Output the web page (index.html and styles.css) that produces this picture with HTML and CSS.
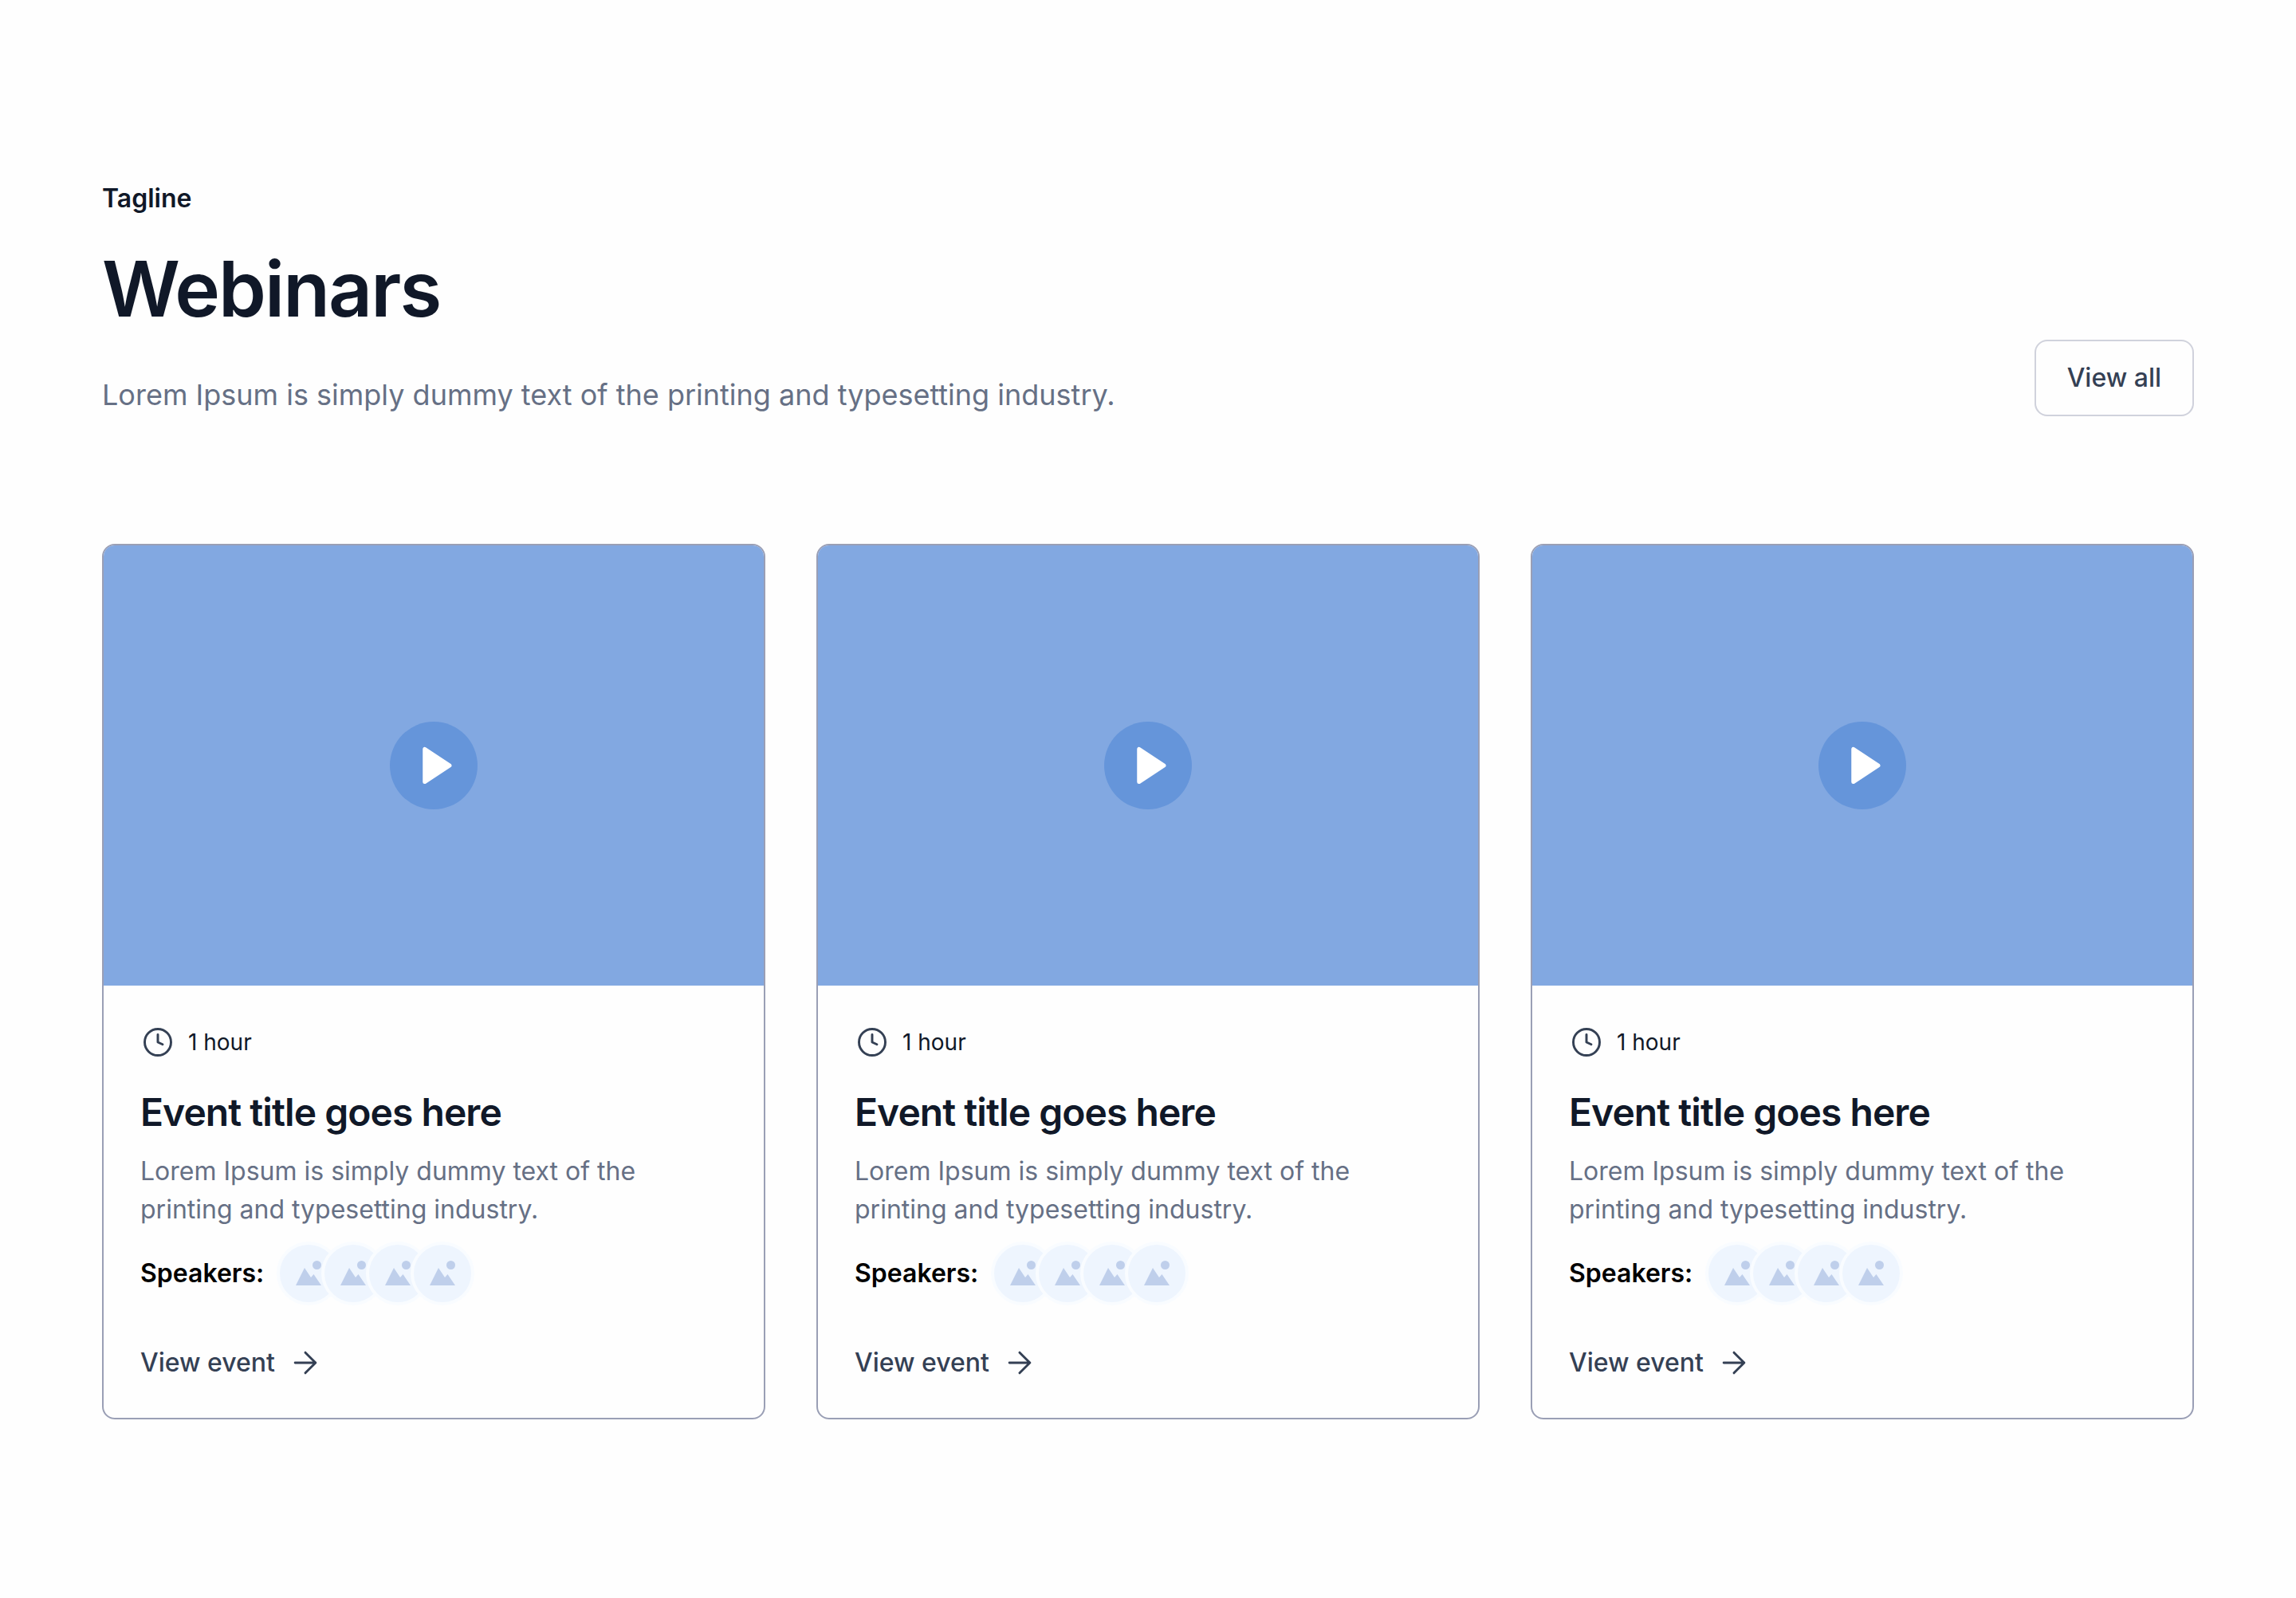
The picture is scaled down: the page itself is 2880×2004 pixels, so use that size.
FILE: index.html
```
<!DOCTYPE html>
<html lang="en">
<head>
  <meta charset="UTF-8" />
  <meta name="viewport" content="width=device-width, initial-scale=1.0"/>
  <title>Webinars</title>
  <link rel="stylesheet" href="styles.css">
</head>
<body>

<!-- shared icons -->
<svg class="sprite" aria-hidden="true">
  <symbol id="play" viewBox="0 0 112 112">
    <path d="M44.500 35v42L76.500 56z" fill="#fff" stroke="#fff" stroke-width="5" stroke-linejoin="round"/>
  </symbol>
  <symbol id="clock" viewBox="0 0 24 24">
    <path d="M12 6.750V12l3.250 1.500"/>
    <circle cx="12" cy="12" r="9"/>
  </symbol>
  <symbol id="arrow" viewBox="0 0 24 24">
    <path d="M5 12h14M12 5l7 7-7 7"/>
  </symbol>
  <symbol id="picture" viewBox="0 0 72 72">
    <path d="M20 51l11-22 8 12 3.500-4L52 51z"/>
    <circle cx="46.500" cy="25.500" r="5.500"/>
  </symbol>
</svg>

<section class="webinars">
  <header class="section-header">
    <div class="heading">
      <p class="tagline">Tagline</p>
      <h1>Webinars</h1>
      <p class="subtitle">Lorem Ipsum is simply dummy text of the printing and typesetting industry.</p>
    </div>
    <button class="view-all" type="button">View all</button>
  </header>

  <div class="cards">
    <article class="card">
      <div class="thumb">
        <button class="play" type="button" aria-label="Play"><svg><use href="#play"/></svg></button>
      </div>
      <div class="card-body">
        <div class="duration"><svg class="icon"><use href="#clock"/></svg><span>1 hour</span></div>
        <h2>Event title goes here</h2>
        <p class="description">Lorem Ipsum is simply dummy text of the printing and typesetting industry.</p>
        <div class="speakers">
          <span>Speakers:</span>
          <div class="avatars">
            <svg class="avatar"><use href="#picture"/></svg>
            <svg class="avatar"><use href="#picture"/></svg>
            <svg class="avatar"><use href="#picture"/></svg>
            <svg class="avatar"><use href="#picture"/></svg>
          </div>
        </div>
        <a class="view-event" href="#">View event <svg class="icon"><use href="#arrow"/></svg></a>
      </div>
    </article>

    <article class="card">
      <div class="thumb">
        <button class="play" type="button" aria-label="Play"><svg><use href="#play"/></svg></button>
      </div>
      <div class="card-body">
        <div class="duration"><svg class="icon"><use href="#clock"/></svg><span>1 hour</span></div>
        <h2>Event title goes here</h2>
        <p class="description">Lorem Ipsum is simply dummy text of the printing and typesetting industry.</p>
        <div class="speakers">
          <span>Speakers:</span>
          <div class="avatars">
            <svg class="avatar"><use href="#picture"/></svg>
            <svg class="avatar"><use href="#picture"/></svg>
            <svg class="avatar"><use href="#picture"/></svg>
            <svg class="avatar"><use href="#picture"/></svg>
          </div>
        </div>
        <a class="view-event" href="#">View event <svg class="icon"><use href="#arrow"/></svg></a>
      </div>
    </article>

    <article class="card">
      <div class="thumb">
        <button class="play" type="button" aria-label="Play"><svg><use href="#play"/></svg></button>
      </div>
      <div class="card-body">
        <div class="duration"><svg class="icon"><use href="#clock"/></svg><span>1 hour</span></div>
        <h2>Event title goes here</h2>
        <p class="description">Lorem Ipsum is simply dummy text of the printing and typesetting industry.</p>
        <div class="speakers">
          <span>Speakers:</span>
          <div class="avatars">
            <svg class="avatar"><use href="#picture"/></svg>
            <svg class="avatar"><use href="#picture"/></svg>
            <svg class="avatar"><use href="#picture"/></svg>
            <svg class="avatar"><use href="#picture"/></svg>
          </div>
        </div>
        <a class="view-event" href="#">View event <svg class="icon"><use href="#arrow"/></svg></a>
      </div>
    </article>
  </div>
</section>

</body>
</html>
```

FILE: styles.css
```
* { margin: 0; padding: 0; box-sizing: border-box; }

body {
  font-family: 'Inter', sans-serif;
  font-size: 32px;
  line-height: 48px;
  color: #101828;
  background: #fefefe;
}

.sprite {
  display: none;
}

.webinars {
  padding: 224px 128px;
}

.section-header {
  display: flex;
  justify-content: space-between;
  align-items: flex-end;
  gap: 64px;
  margin-bottom: 160px;
}

.tagline {
  line-height: 50px;
  font-weight: 600;
  margin-bottom: 32px;
}

h1 {
  font-size: 96px;
  line-height: 112px;
  font-weight: 600;
  letter-spacing: -0.02em;
  margin-bottom: 50px;
}

.subtitle {
  font-size: 36px;
  line-height: 54px;
  color: #667085;
}

.view-all {
  padding: 22px 39px;
  border: 2px solid #d0d2dc;
  border-radius: 16px;
  background: #fefefe;
  color: #344054;
  font: inherit;
  font-weight: 500;
  white-space: nowrap;
  cursor: pointer;
}

.cards {
  display: grid;
  grid-template-columns: repeat(3, 1fr);
  gap: 64px;
}

.card {
  border: 2px solid #9a9fb5;
  border-radius: 16px;
  overflow: hidden;
}

.thumb {
  aspect-ratio: 3 / 2;
  background: #82a8e1;
  display: flex;
  align-items: center;
  justify-content: center;
}

.play {
  width: 110px;
  height: 110px;
  border: none;
  border-radius: 50%;
  background: #6595da;
  cursor: pointer;
}

.play svg {
  display: block;
  width: 100%;
  height: 100%;
}

.card-body {
  padding: 49px 46px 45px;
}

.icon {
  width: 44px;
  height: 44px;
  fill: none;
  stroke: #344054;
  stroke-width: 1.6;
  stroke-linecap: round;
  stroke-linejoin: round;
}

.duration {
  display: flex;
  align-items: center;
  gap: 16px;
  font-size: 28px;
  line-height: 44px;
  margin-bottom: 32px;
}

h2 {
  font-size: 48px;
  line-height: 68px;
  font-weight: 600;
  letter-spacing: -0.02em;
  margin-bottom: 16px;
}

.description {
  max-width: 680px;
  color: #667085;
  margin-bottom: 16px;
}

.speakers {
  display: flex;
  align-items: center;
  gap: 16px;
  font-weight: 600;
  color: #000;
  margin-bottom: 48px;
}

.avatars {
  display: flex;
}

.avatar {
  width: 80px;
  height: 80px;
  border: 4px solid #f9fcff;
  border-radius: 50%;
  background: #eef5fe;
  fill: #bfcfeb;
}

.avatar + .avatar {
  margin-left: -24px;
}

.view-event {
  display: flex;
  align-items: center;
  gap: 16px;
  width: fit-content;
  font-weight: 500;
  color: #344054;
  text-decoration: none;
}
```
